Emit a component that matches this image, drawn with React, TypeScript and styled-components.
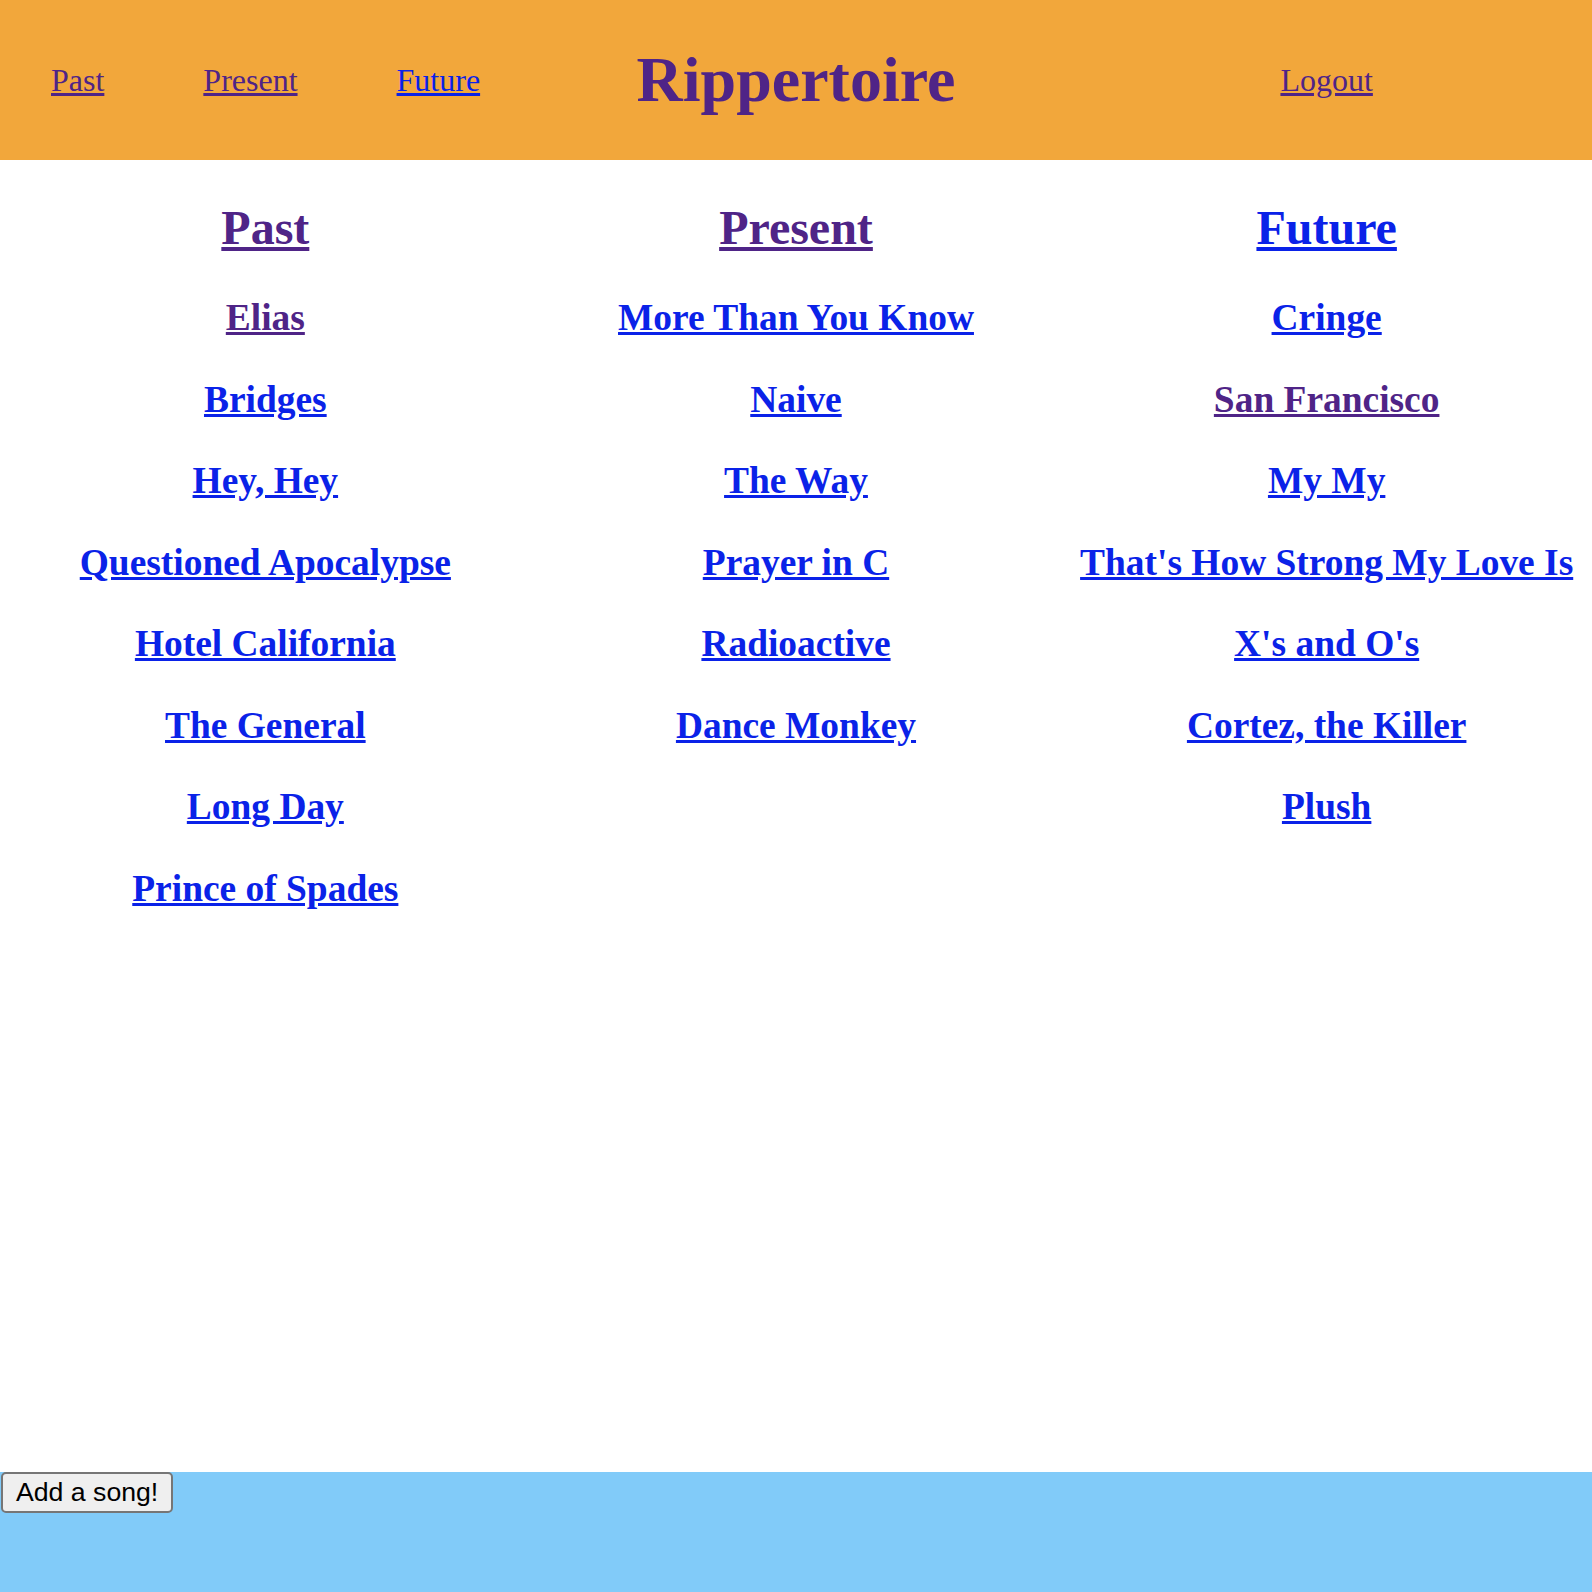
import React from "react";
import styled, { createGlobalStyle } from "styled-components";

const PURPLE = "#4f2487";
const BLUE = "#0a22e8";

const GlobalStyle = createGlobalStyle`
  html, body {
    margin: 0;
    padding: 0;
  }
  body {
    font-family: "Liberation Serif", "Times New Roman", serif;
    background: #ffffff;
  }
`;

const Page = styled.div`
  min-height: 100vh;
  display: flex;
  flex-direction: column;
`;

const Header = styled.header`
  height: 160px;
  display: grid;
  grid-template-columns: repeat(3, 1fr);
  align-items: center;
  background: #f2a73b;
`;

const Nav = styled.nav`
  display: flex;
  align-items: center;
  gap: 99px;
  padding-left: 51px;
`;

const Link = styled.a<{ $visited?: boolean }>`
  color: ${(p) => (p.$visited ? PURPLE : BLUE)};
  text-decoration: underline;
  cursor: pointer;
`;

const NavLink = styled(Link)`
  font-size: 32px;
  line-height: 1.15;
`;

const Title = styled.h1`
  margin: 0;
  font-size: 64px;
  line-height: 1.15;
  font-weight: bold;
  color: ${PURPLE};
  text-align: center;
`;

const Right = styled.div`
  display: flex;
  justify-content: center;
`;

const Main = styled.main`
  flex: 1;
  display: grid;
  grid-template-columns: repeat(3, 1fr);
  align-items: start;
  padding-top: 40px;
`;

const Column = styled.section`
  display: flex;
  flex-direction: column;
  align-items: center;
`;

const Heading = styled.h2`
  margin: 0 0 41px;
  font-size: 48px;
  line-height: 1.15;
  font-weight: bold;
  text-align: center;
`;

const Songs = styled.ul`
  list-style: none;
  margin: 0;
  padding: 0;
  display: flex;
  flex-direction: column;
  align-items: center;
  gap: 37.5px;
`;

const Song = styled.li`
  font-size: 37.44px;
  line-height: 44px;
  font-weight: bold;
  text-align: center;
  white-space: nowrap;
`;

const Footer = styled.footer`
  height: 120px;
  background: #81cbf9;
  display: flex;
  align-items: flex-start;
`;

const AddButton = styled.button`
  height: 41px;
  box-sizing: border-box;
  margin: 0 0 0 1px;
  padding: 0 13px;
  font-family: "Liberation Sans", Arial, sans-serif;
  font-size: 26.67px;
  line-height: 1;
  color: #000;
  background: #efefef;
  border: 2px solid #767676;
  border-radius: 5px;
  cursor: pointer;
`;

type Item = { title: string; visited?: boolean };

const columns: { name: string; visited: boolean; songs: Item[] }[] = [
  {
    name: "Past",
    visited: true,
    songs: [
      { title: "Elias", visited: true },
      { title: "Bridges" },
      { title: "Hey, Hey" },
      { title: "Questioned Apocalypse" },
      { title: "Hotel California" },
      { title: "The General" },
      { title: "Long Day" },
      { title: "Prince of Spades" },
    ],
  },
  {
    name: "Present",
    visited: true,
    songs: [
      { title: "More Than You Know" },
      { title: "Naive" },
      { title: "The Way" },
      { title: "Prayer in C" },
      { title: "Radioactive" },
      { title: "Dance Monkey" },
    ],
  },
  {
    name: "Future",
    visited: false,
    songs: [
      { title: "Cringe" },
      { title: "San Francisco", visited: true },
      { title: "My My" },
      { title: "That's How Strong My Love Is" },
      { title: "X's and O's" },
      { title: "Cortez, the Killer" },
      { title: "Plush" },
    ],
  },
];

export default function App() {
  return (
    <>
      <GlobalStyle />
      <Page>
        <Header>
          <Nav>
            <NavLink $visited>Past</NavLink>
            <NavLink $visited>Present</NavLink>
            <NavLink>Future</NavLink>
          </Nav>
          <Title>Rippertoire</Title>
          <Right>
            <NavLink $visited>Logout</NavLink>
          </Right>
        </Header>
        <Main>
          {columns.map((col) => (
            <Column key={col.name}>
              <Heading>
                <Link $visited={col.visited}>{col.name}</Link>
              </Heading>
              <Songs>
                {col.songs.map((s) => (
                  <Song key={s.title}>
                    <Link $visited={s.visited}>{s.title}</Link>
                  </Song>
                ))}
              </Songs>
            </Column>
          ))}
        </Main>
        <Footer>
          <AddButton>Add a song!</AddButton>
        </Footer>
      </Page>
    </>
  );
}
